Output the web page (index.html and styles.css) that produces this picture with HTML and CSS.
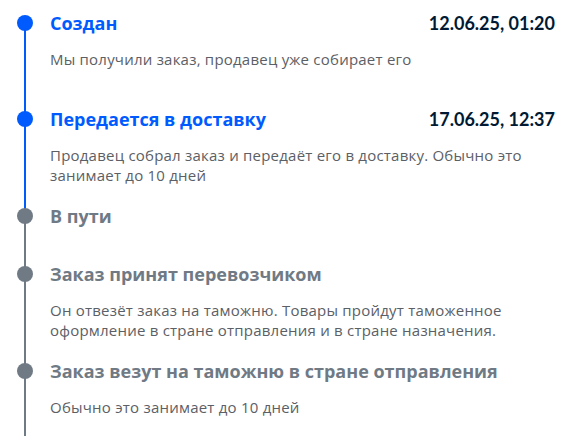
FILE: index.html
```html
<!doctype html>
<html lang="ru">
	<head>
		<meta charset="UTF-8" />
		<meta name="viewport" content="width=device-width, initial-scale=1.0" />
		<title>Статус заказа</title>
		<link rel="stylesheet" href="styles.css">
	</head>
	<body>
		<ul class="timeline">
			<li class="step done spaced">
				<div class="step-head">
					<span class="step-title">Создан</span>
					<span class="step-date">12.06.25, 01:20</span>
				</div>
				<p class="step-text">Мы получили заказ, продавец уже собирает его</p>
			</li>
			<li class="step done last-done">
				<div class="step-head">
					<span class="step-title">Передается в доставку</span>
					<span class="step-date">17.06.25, 12:37</span>
				</div>
				<p class="step-text">Продавец собрал заказ и передаёт его в доставку. Обычно это занимает до 10 дней</p>
			</li>
			<li class="step empty">
				<div class="step-head">
					<span class="step-title">В пути</span>
				</div>
			</li>
			<li class="step">
				<div class="step-head">
					<span class="step-title">Заказ принят перевозчиком</span>
				</div>
				<p class="step-text">Он отвезёт заказ на таможню. Товары пройдут таможенное оформление в стране отправления и в стране назначения.</p>
			</li>
			<li class="step">
				<div class="step-head">
					<span class="step-title">Заказ везут на таможню в стране отправления</span>
				</div>
				<p class="step-text">Обычно это занимает до 10 дней</p>
			</li>
		</ul>
	</body>
</html>
```

FILE: styles.css
```css
body { margin: 0; background: #fff; font-family: "Open Sans", "Noto Sans", sans-serif; overflow: hidden; }
.timeline { list-style: none; margin: 0; padding: 11px 8px 0 50px; }
.step { position: relative; padding-bottom: 19px; }
.step::before { content: ""; position: absolute; left: -26px; top: 12px; bottom: -12px; width: 2px; background: #707a85; }
.step::after { content: ""; position: absolute; left: -33px; top: 4px; width: 16px; height: 16px; border-radius: 50%; background: #707a85; }
.step.done::before, .step.done::after { background: #005bff; }
.step.spaced { padding-bottom: 38px; }
.step.empty { padding-bottom: 34px; }
.step:last-child::before { bottom: -30px; }
.step-head { display: flex; justify-content: space-between; align-items: center; height: 24px; }
.step-title { font-size: 18px; font-weight: 700; color: #707a85; }
.done .step-title { color: #005bff; }
.step-date { font-family: Lato, sans-serif; font-size: 18px; font-weight: 700; color: #001a34; }
.step-text { margin: 14px 0 0; font-size: 15px; line-height: 20px; letter-spacing: 0.22px; color: #5b6066; }
```
